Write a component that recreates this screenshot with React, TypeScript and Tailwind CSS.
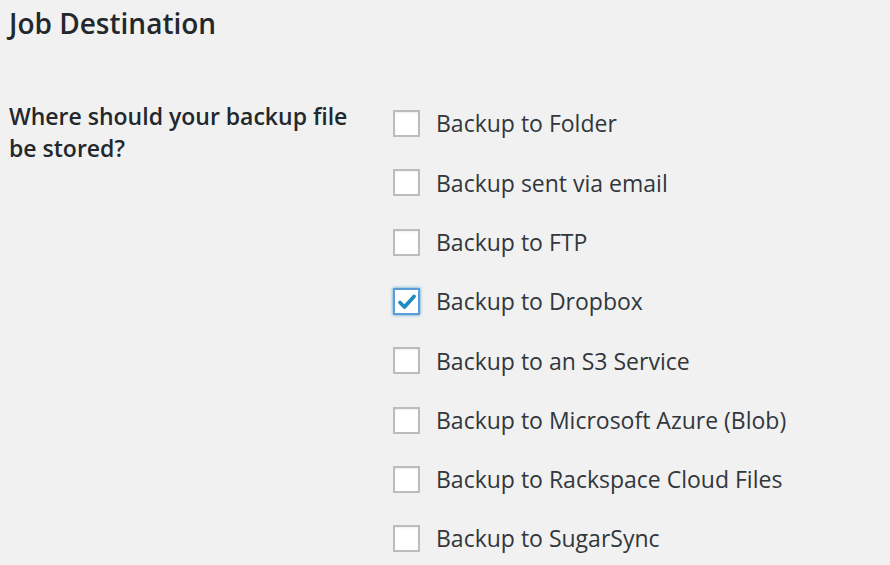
import React from 'react';

const options: { label: string; checked?: boolean }[] = [
  { label: 'Backup to Folder' },
  { label: 'Backup sent via email' },
  { label: 'Backup to FTP' },
  { label: 'Backup to Dropbox', checked: true },
  { label: 'Backup to an S3 Service' },
  { label: 'Backup to Microsoft Azure (Blob)' },
  { label: 'Backup to Rackspace Cloud Files' },
  { label: 'Backup to SugarSync' },
];

const Checkbox: React.FC<{ checked?: boolean }> = ({ checked }) => (
  <span
    className={`flex h-[27px] w-[27px] shrink-0 items-center justify-center bg-white ${
      checked
        ? 'border-2 border-[#5b9dd9] shadow-[0_0_3px_rgba(30,140,190,0.8)]'
        : 'border-2 border-[#bcbcbc] shadow-[inset_0_1px_2px_rgba(0,0,0,0.07)]'
    }`}
  >
    {checked && (
      <svg width="20" height="20" viewBox="0 0 20 20">
        <path d="M3 10.5 L7.5 15 L17 4.5" fill="none" stroke="#1e8cbe" strokeWidth="3.8" strokeLinecap="round" strokeLinejoin="round" />
      </svg>
    )}
  </span>
);

export default function App() {
  return (
    <div className="min-h-[565px] bg-[#f1f1f1] pl-[9px] text-[#23282d] font-['Open_Sans','Liberation_Sans',sans-serif]">
      <h2 className="pt-[4px] text-[28px] font-semibold leading-[38px]">Job Destination</h2>
      <div className="mt-[52px] flex">
        <div className="w-[384px] pt-[6px] text-[23px] font-semibold leading-[32px]">
          Where should your backup file
          <br />
          be stored?
        </div>
        <div className="flex flex-col">
          {options.map((o) => (
            <label key={o.label} className="flex h-[59.3px] items-center gap-[16px] text-[23px] text-[#32373c]">
              <Checkbox checked={o.checked} />
              <span>{o.label}</span>
            </label>
          ))}
        </div>
      </div>
    </div>
  );
}
